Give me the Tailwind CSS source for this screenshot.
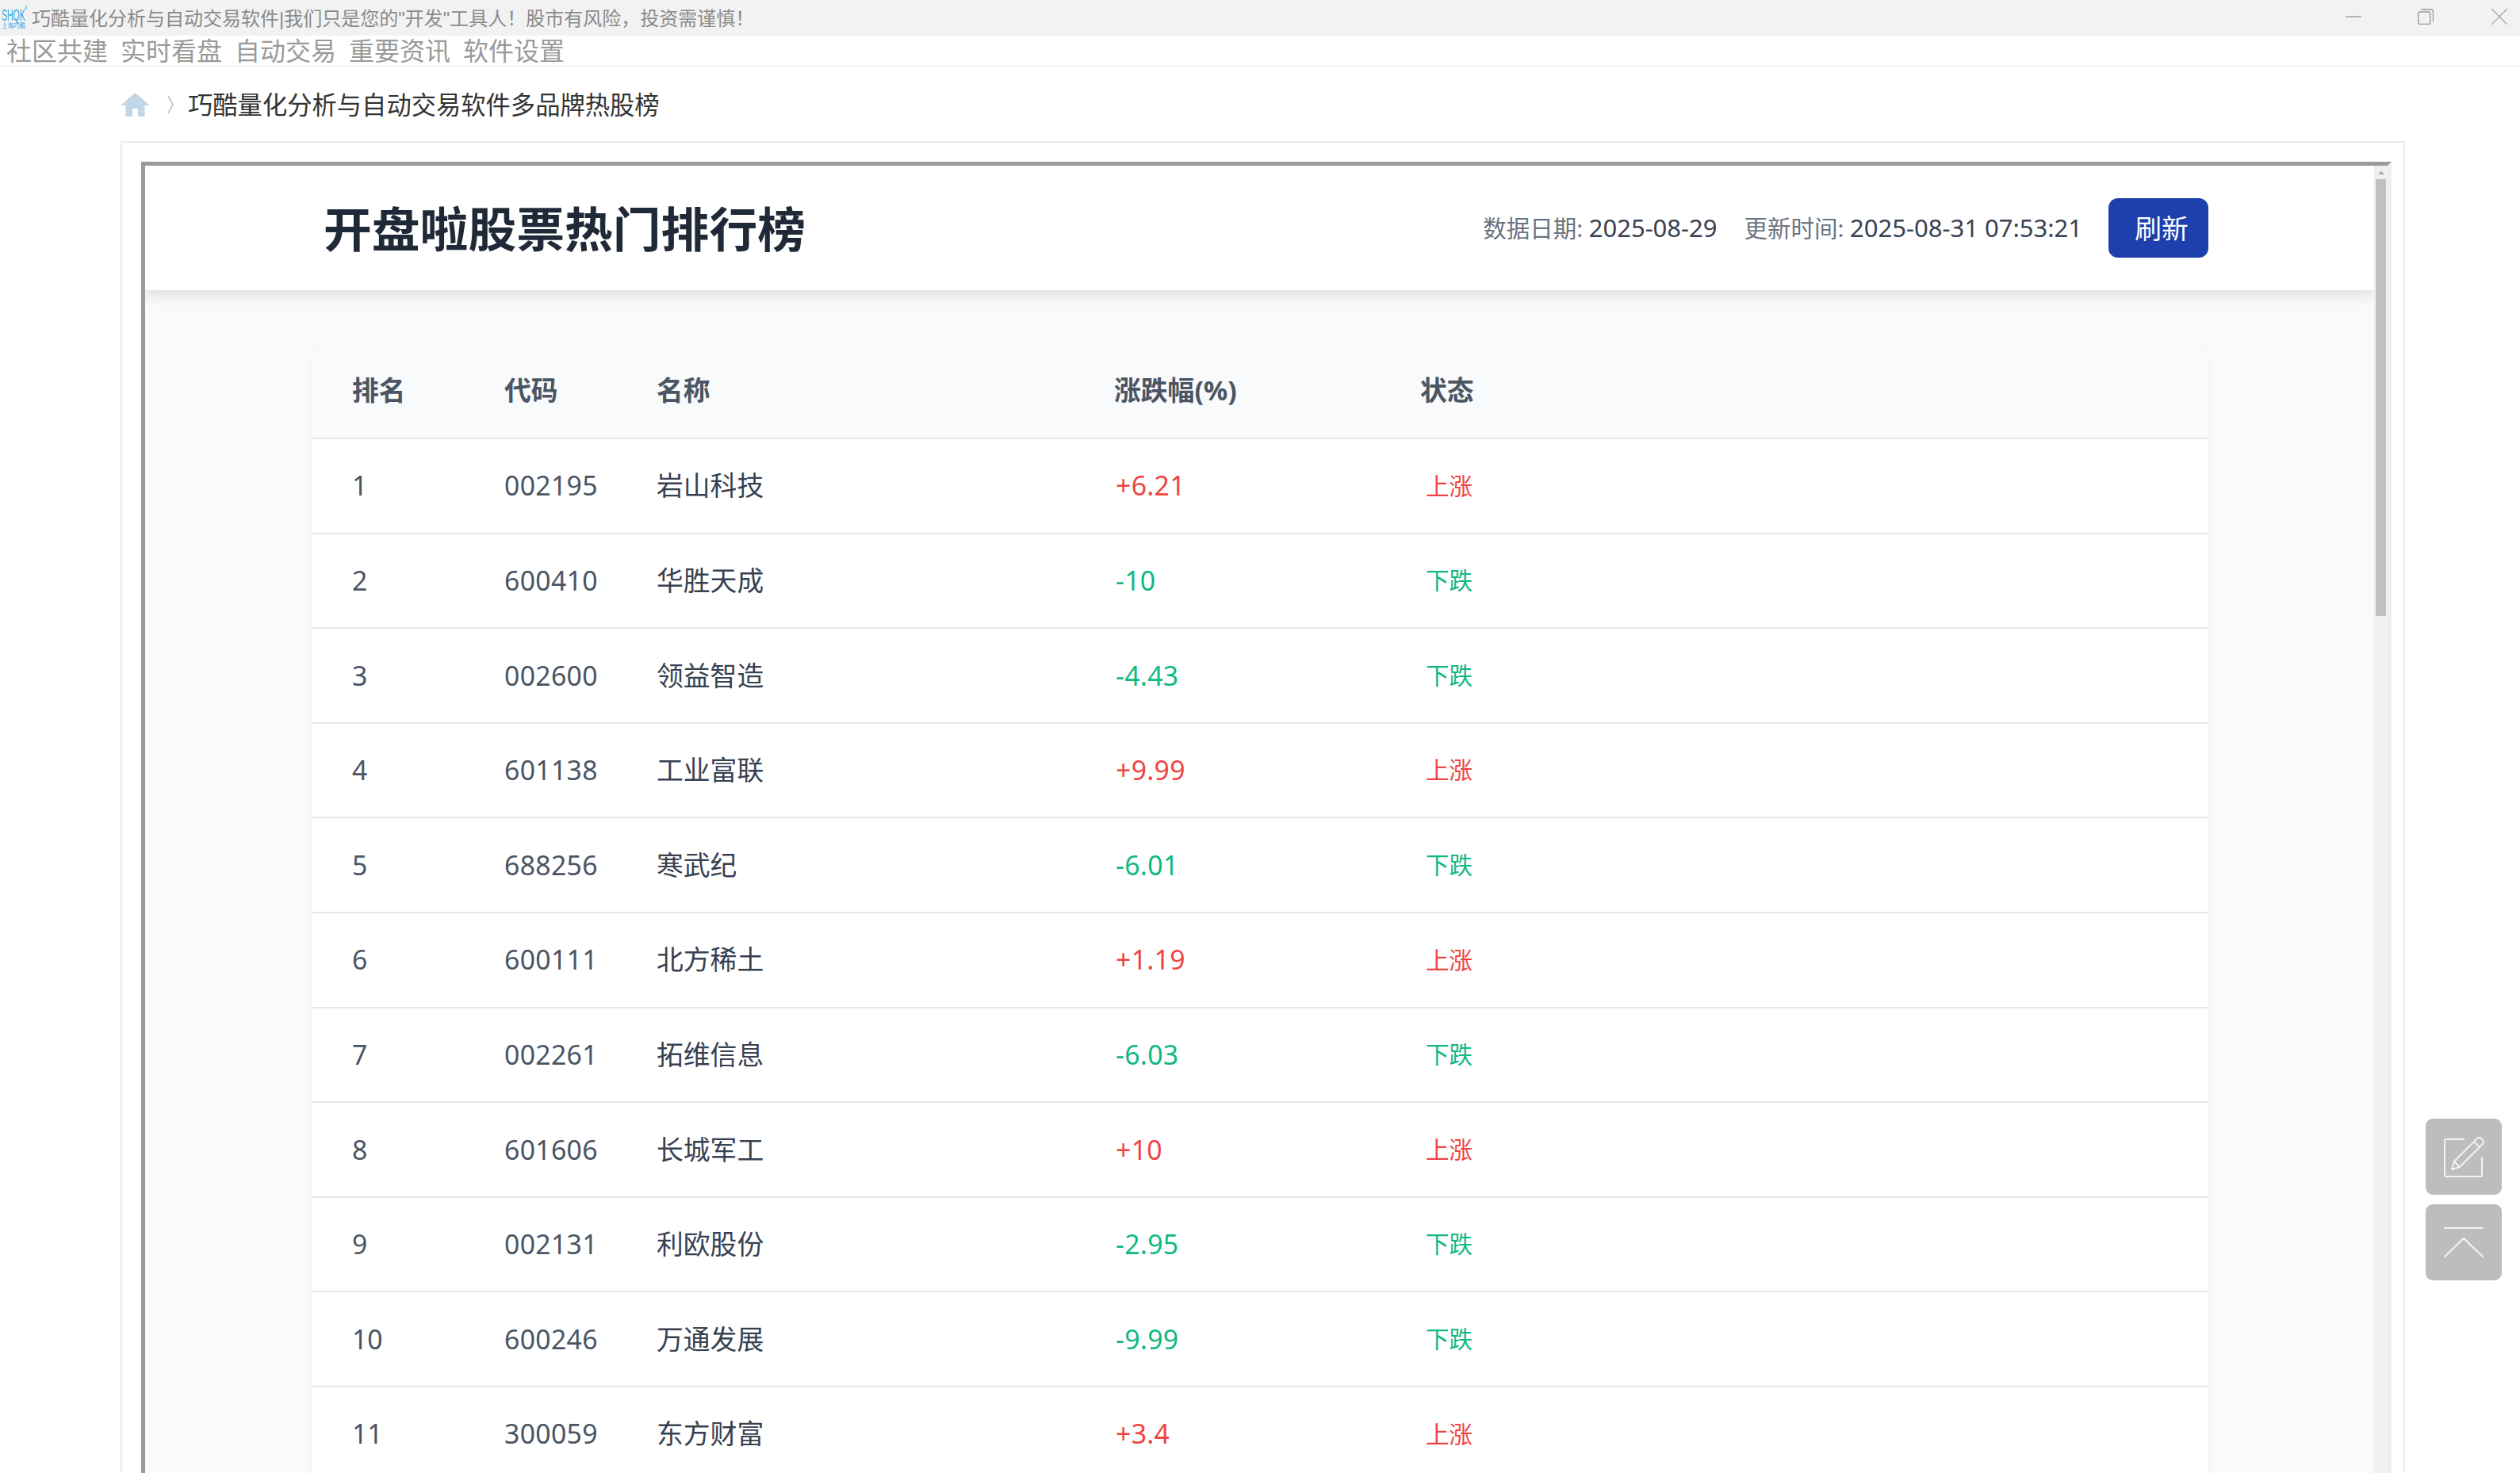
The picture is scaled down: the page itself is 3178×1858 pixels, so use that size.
<!DOCTYPE html>
<html lang="zh-CN">
<head>
  <meta charset="UTF-8">
  <title>巧酷量化分析与自动交易软件</title>
  <script src="https://cdn.jsdelivr.net/npm/@tailwindcss/browser@4"></script>
</head>
<body class="h-screen overflow-hidden flex flex-col bg-white font-['Noto_Sans','Noto_Sans_CJK_SC',sans-serif]">

  <!-- title bar -->
  <div class="h-[45px] shrink-0 bg-[#f2f2f2] flex items-center">
    <div class="w-[38px] h-[45px] pl-[2px] flex flex-col text-[#2ea7e0] relative">
      <span class="w-max origin-left scale-x-[0.5] text-[21px] leading-[15px] mt-[11px] font-['Liberation_Sans',sans-serif] whitespace-nowrap">SHQK</span>
      <span class="text-[7.500px] leading-[9px] mt-[2px] whitespace-nowrap">上海巧酷</span>
      <div class="absolute left-[32px] top-[7px] w-[1.500px] h-[5px] rotate-12 bg-[#7cc8ec]"></div>
    </div>
    <span class="text-[24px] leading-none text-[#8a8a8a] ml-[2px] mt-[2px] whitespace-nowrap font-['Liberation_Sans','Noto_Sans_CJK_SC',sans-serif]">巧酷量化分析与自动交易软件|我们只是您的"开发"工具人！股市有风险，投资需谨慎！</span>
    <div class="ml-auto mb-[3px] flex items-center text-[#9a9a9a]">
      <svg class="w-[20px] h-[20px] mr-[71px]" viewBox="0 0 20 20"><path d="M0 10h20" stroke="currentColor" stroke-width="1.400"/></svg>
      <svg class="w-[20px] h-[20px] mr-[73px]" viewBox="0 0 20 20" fill="none" stroke="currentColor" stroke-width="1.400"><rect x="0.700" y="4" width="15" height="15.500" rx="2"/><path d="M4 1h12.500a3 3 0 0 1 3 3v12.500"/></svg>
      <svg class="w-[20px] h-[20px] mr-[16px]" viewBox="0 0 20 20"><path d="M0 0l20 20M20 0L0 20" stroke="currentColor" stroke-width="1.200"/></svg>
    </div>
  </div>

  <!-- top menu -->
  <nav class="h-[39px] shrink-0 border-b border-[#eeeeee] pl-[8px] flex gap-[16px] text-[32px] leading-[38px] text-[#9a9a9a]">
    <a>社区共建</a><a>实时看盘</a><a>自动交易</a><a>重要资讯</a><a>软件设置</a>
  </nav>

  <!-- breadcrumb -->
  <div class="h-[94px] shrink-0 pl-[152px] pt-[4px] flex items-center">
    <svg class="w-[37px] h-[30px] mb-[2px]" viewBox="0 0 37 30"><path d="M18.500 0L37 16h-6.500v14H22V20h-7v10H6.500V16H0z" fill="#c3d6e5"/></svg>
    <svg class="w-[8px] h-[24px] ml-[22px] mb-[2px]" viewBox="0 0 8 24" fill="none"><path d="M1 1l6 11-6 11" stroke="#c4c4c4" stroke-width="1.700"/></svg>
    <span class="ml-[18px] text-[31.300px] leading-none text-[#333333] whitespace-nowrap">巧酷量化分析与自动交易软件多品牌热股榜</span>
  </div>

  <!-- outer card -->
  <div class="ml-[152px] w-[2881px] flex-1 min-h-0 overflow-hidden border-2 border-b-0 border-[#ebebeb] pt-[24px] pl-[24px] pr-[15px]">
    <div class="h-full flex border-[5px] border-b-0 border-t-[#9a9a9a] border-l-[#9a9a9a] border-r-[#eeeeee]">

      <!-- frame content -->
      <div class="flex-1 min-w-0 overflow-hidden bg-[#f9fafb]">
        <header class="h-[157px] bg-white shadow-[0_4px_20px_rgba(0,0,0,0.14)] pl-[225px] pr-[209px] flex items-center justify-between relative">
          <h1 class="mt-[4px] text-[60.800px] leading-none font-bold text-[#1f2937]">开盘啦股票热门排行榜</h1>
          <div class="flex items-center text-[29.500px] leading-none">
            <span class="text-[#6b7280]">数据日期: <span class="text-[#374151] text-[31px]">2025-08-29</span></span>
            <span class="text-[#6b7280] ml-[34px]">更新时间: <span class="text-[#374151] text-[31px]">2025-08-31 07:53:21</span></span>
            <button class="ml-[33px] w-[126px] h-[75px] pl-[8px] pt-[2px] rounded-[12px] bg-[#1e40af] text-white text-[33.800px] leading-none">刷新</button>
          </div>
        </header>

        <main class="mt-[67px] ml-[210px] w-[2392px] bg-white rounded-t-[24px] overflow-hidden shadow-[0_2px_8px_rgba(0,0,0,0.05)]">
          <table class="w-full table-fixed text-[33.800px]">
            <colgroup>
              <col class="w-[192px]"><col class="w-[192px]"><col class="w-[577px]"><col class="w-[386px]"><col>
            </colgroup>
            <thead class="bg-[#f9fafb] text-[#4b5563] text-left">
              <tr class="h-[120px] border-b-2 border-[#e5e7eb]">
                <th class="pl-[51px] font-bold">排名</th>
                <th class="pl-[51px] font-bold">代码</th>
                <th class="pl-[51px] font-bold">名称</th>
                <th class="pl-[51px] font-bold">涨跌幅(%)</th>
                <th class="pl-[51px] font-bold">状态</th>
              </tr>
            </thead>
            <tbody class="text-[#4b5563]">
              <tr class="h-[119.600px] border-b-2 border-[#e5e7eb]"><td class="pl-[51px]">1</td><td class="pl-[51px] tracking-[0.300px]">002195</td><td class="pl-[51px] text-[#374151]">岩山科技</td><td class="pl-[53px] tracking-[0.300px] text-[#ef4444]">+6.21</td><td class="pl-[58px] text-[29.500px] text-[#ef4444]">上涨</td></tr>
              <tr class="h-[119.600px] border-b-2 border-[#e5e7eb]"><td class="pl-[51px]">2</td><td class="pl-[51px] tracking-[0.300px]">600410</td><td class="pl-[51px] text-[#374151]">华胜天成</td><td class="pl-[53px] tracking-[0.300px] text-[#10b981]">-10</td><td class="pl-[58px] text-[29.500px] text-[#10b981]">下跌</td></tr>
              <tr class="h-[119.600px] border-b-2 border-[#e5e7eb]"><td class="pl-[51px]">3</td><td class="pl-[51px] tracking-[0.300px]">002600</td><td class="pl-[51px] text-[#374151]">领益智造</td><td class="pl-[53px] tracking-[0.300px] text-[#10b981]">-4.43</td><td class="pl-[58px] text-[29.500px] text-[#10b981]">下跌</td></tr>
              <tr class="h-[119.600px] border-b-2 border-[#e5e7eb]"><td class="pl-[51px]">4</td><td class="pl-[51px] tracking-[0.300px]">601138</td><td class="pl-[51px] text-[#374151]">工业富联</td><td class="pl-[53px] tracking-[0.300px] text-[#ef4444]">+9.99</td><td class="pl-[58px] text-[29.500px] text-[#ef4444]">上涨</td></tr>
              <tr class="h-[119.600px] border-b-2 border-[#e5e7eb]"><td class="pl-[51px]">5</td><td class="pl-[51px] tracking-[0.300px]">688256</td><td class="pl-[51px] text-[#374151]">寒武纪</td><td class="pl-[53px] tracking-[0.300px] text-[#10b981]">-6.01</td><td class="pl-[58px] text-[29.500px] text-[#10b981]">下跌</td></tr>
              <tr class="h-[119.600px] border-b-2 border-[#e5e7eb]"><td class="pl-[51px]">6</td><td class="pl-[51px] tracking-[0.300px]">600111</td><td class="pl-[51px] text-[#374151]">北方稀土</td><td class="pl-[53px] tracking-[0.300px] text-[#ef4444]">+1.19</td><td class="pl-[58px] text-[29.500px] text-[#ef4444]">上涨</td></tr>
              <tr class="h-[119.600px] border-b-2 border-[#e5e7eb]"><td class="pl-[51px]">7</td><td class="pl-[51px] tracking-[0.300px]">002261</td><td class="pl-[51px] text-[#374151]">拓维信息</td><td class="pl-[53px] tracking-[0.300px] text-[#10b981]">-6.03</td><td class="pl-[58px] text-[29.500px] text-[#10b981]">下跌</td></tr>
              <tr class="h-[119.600px] border-b-2 border-[#e5e7eb]"><td class="pl-[51px]">8</td><td class="pl-[51px] tracking-[0.300px]">601606</td><td class="pl-[51px] text-[#374151]">长城军工</td><td class="pl-[53px] tracking-[0.300px] text-[#ef4444]">+10</td><td class="pl-[58px] text-[29.500px] text-[#ef4444]">上涨</td></tr>
              <tr class="h-[119.600px] border-b-2 border-[#e5e7eb]"><td class="pl-[51px]">9</td><td class="pl-[51px] tracking-[0.300px]">002131</td><td class="pl-[51px] text-[#374151]">利欧股份</td><td class="pl-[53px] tracking-[0.300px] text-[#10b981]">-2.95</td><td class="pl-[58px] text-[29.500px] text-[#10b981]">下跌</td></tr>
              <tr class="h-[119.600px] border-b-2 border-[#e5e7eb]"><td class="pl-[51px]">10</td><td class="pl-[51px] tracking-[0.300px]">600246</td><td class="pl-[51px] text-[#374151]">万通发展</td><td class="pl-[53px] tracking-[0.300px] text-[#10b981]">-9.99</td><td class="pl-[58px] text-[29.500px] text-[#10b981]">下跌</td></tr>
              <tr class="h-[119.600px] border-b-2 border-[#e5e7eb]"><td class="pl-[51px]">11</td><td class="pl-[51px] tracking-[0.300px]">300059</td><td class="pl-[51px] text-[#374151]">东方财富</td><td class="pl-[53px] tracking-[0.300px] text-[#ef4444]">+3.4</td><td class="pl-[58px] text-[29.500px] text-[#ef4444]">上涨</td></tr>
            </tbody>
          </table>
        </main>
      </div>

      <!-- frame scrollbar -->
      <div class="w-[17px] shrink-0 bg-[#f0f0f0] flex flex-col items-center">
        <div class="h-[17px] flex items-center"><div class="mt-[1px] border-x-[4px] border-x-transparent border-b-[4px] border-b-[#a3a3a3]"></div></div>
        <div class="w-[13px] h-[551px] bg-[#c1c1c1]"></div>
      </div>
    </div>
  </div>

  <!-- floating buttons -->
  <div class="fixed left-[3059px] top-[1411px] flex flex-col gap-[12px]">
    <a class="w-[96px] h-[96px] rounded-[9px] bg-[#bdbdbd] flex items-center justify-center">
      <svg class="w-[52px] h-[52px]" viewBox="0 0 52 52" fill="none" stroke="#f4f4f4" stroke-width="2" stroke-linecap="round" stroke-linejoin="round"><path d="M26 4H4a2 2 0 0 0-2 2v43a2 2 0 0 0 2 2h43a2 2 0 0 0 2-2V27"/><path d="M11 42l3-10L43 3a3.500 3.500 0 0 1 5 0l2 2a3.500 3.500 0 0 1 0 5L21 39zM14 32l7 7M39 7l7 7"/></svg>
    </a>
    <a class="w-[96px] h-[96px] rounded-[9px] bg-[#bdbdbd] flex items-center justify-center">
      <svg class="w-[50px] h-[38px]" viewBox="0 0 50 38" fill="none" stroke="#f4f4f4" stroke-width="2" stroke-linecap="round"><path d="M1 1h48M1 37l24-23 24 23"/></svg>
    </a>
  </div>
</body>
</html>
